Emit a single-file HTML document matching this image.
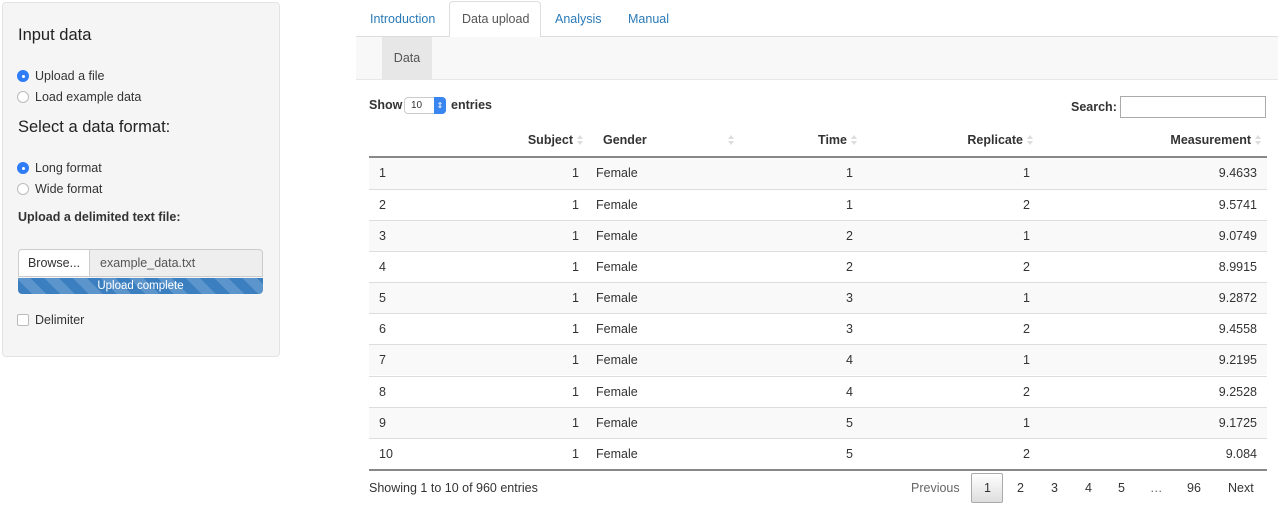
<!DOCTYPE html>
<html><head><style>
*{box-sizing:border-box;margin:0;padding:0}
body{width:1280px;height:505px;background:#fff;font-family:"Liberation Sans",Arial,sans-serif;font-size:12.5px;color:#333;position:relative;overflow:hidden}
.a{position:absolute;white-space:nowrap}
.side{left:2px;top:2px;width:278px;height:355px;background:#f5f5f5;border:1px solid #e3e3e3;border-radius:4px}
.radio{width:12px;height:12px;border-radius:50%;border:1px solid #bbb;background:#fff}
.radio.on{background:#2f7df6;border-color:#2f7df6}
.radio.on::after{content:"";position:absolute;left:3.5px;top:3.5px;width:3px;height:3px;border-radius:50%;background:#fff}
.tab{color:#2a7ab8}
.row{position:absolute;left:369px;width:898px;height:31px;border-top:1px solid #ddd}
.row span{position:absolute;top:8px}
.r{text-align:right}
.th{font-weight:bold;top:133px}
.sort{position:absolute;width:6px;height:11px}
.sort::before{content:"";position:absolute;left:0;top:0;border-left:3px solid transparent;border-right:3px solid transparent;border-bottom:4px solid #ddd}
.sort::after{content:"";position:absolute;left:0;top:6px;border-left:3px solid transparent;border-right:3px solid transparent;border-top:4px solid #ddd}
.pg{top:481px}
</style></head><body>
<div class="a side"></div>
<div class="a" style="left:18px;top:26px;font-size:16.5px;color:#222">Input data</div>
<div class="a radio on" style="left:17px;top:70px"></div><div class="a" style="left:35px;top:69px">Upload a file</div>
<div class="a radio" style="left:17px;top:91px"></div><div class="a" style="left:35px;top:90px">Load example data</div>
<div class="a" style="left:18px;top:118px;font-size:16.5px;color:#222">Select a data format:</div>
<div class="a radio on" style="left:17px;top:162px"></div><div class="a" style="left:35px;top:161px">Long format</div>
<div class="a radio" style="left:17px;top:183px"></div><div class="a" style="left:35px;top:182px">Wide format</div>
<div class="a" style="left:18px;top:210px;font-weight:bold">Upload a delimited text file:</div>
<div class="a" style="left:18px;top:249px;width:72px;height:28px;background:#fff;border:1px solid #ccc;border-radius:4px 0 0 0;text-align:center;line-height:26px">Browse...</div>
<div class="a" style="left:89px;top:249px;width:174px;height:28px;background:#eee;border:1px solid #ccc;border-radius:0 4px 0 0;line-height:26px;padding-left:10px;color:#555">example_data.txt</div>
<div class="a" style="left:18px;top:278px;width:245px;height:16px;border-radius:0 0 4px 4px;background:repeating-linear-gradient(45deg,#3b7fc0 0 10px,#5b95cc 10px 20px);color:#fff;font-size:11.5px;text-align:center;line-height:16px">Upload complete</div>
<div class="a" style="left:17px;top:314px;width:12px;height:12px;border:1px solid #bbb;border-radius:2px;background:#fff"></div>
<div class="a" style="left:35px;top:313px">Delimiter</div>

<div class="a" style="left:356px;top:36px;width:922px;border-top:1px solid #ddd"></div>
<div class="a" style="left:449px;top:1px;width:92px;height:37px;background:#fff;border:1px solid #ddd;border-bottom:none;border-radius:4px 4px 0 0"></div>
<div class="a tab" style="left:370px;top:12px">Introduction</div>
<div class="a" style="left:462px;top:12px;color:#555">Data upload</div>
<div class="a tab" style="left:555px;top:12px">Analysis</div>
<div class="a tab" style="left:628px;top:12px">Manual</div>
<div class="a" style="left:356px;top:37px;width:922px;height:43px;background:#f8f8f8;border-bottom:1px solid #e7e7e7"></div>
<div class="a" style="left:382px;top:37px;width:50px;height:42px;background:#e7e7e7;color:#555;text-align:center;line-height:42px">Data</div>

<div class="a" style="left:369px;top:98px;font-weight:bold">Show</div>
<div class="a" style="left:404px;top:97px;width:42px;height:17px;border:1px solid #ccc;border-radius:4px;background:#fff;font-size:10px;line-height:15px;padding-left:6px">10</div>
<div class="a" style="left:434px;top:97px;width:12px;height:17px;background:#3a86f0;border-radius:0 4px 4px 0;color:#fff;font-size:8px;text-align:center;line-height:17px">⇕</div>
<div class="a" style="left:451px;top:98px;font-weight:bold">entries</div>
<div class="a" style="left:1071px;top:100px;font-weight:bold">Search:</div>
<div class="a" style="left:1120px;top:96px;width:146px;height:22px;border:1px solid #aaa;background:#fff"></div>

<div class="a th r" style="left:480px;width:93px">Subject</div><div class="a sort" style="left:577px;top:135px"></div>
<div class="a th" style="left:603px">Gender</div><div class="a sort" style="left:728px;top:135px"></div>
<div class="a th r" style="left:760px;width:87px">Time</div><div class="a sort" style="left:851px;top:135px"></div>
<div class="a th r" style="left:900px;width:123px">Replicate</div><div class="a sort" style="left:1027px;top:135px"></div>
<div class="a th r" style="left:1100px;width:151px">Measurement</div><div class="a sort" style="left:1255px;top:135px"></div>
<div class="a" style="left:369px;top:156px;width:898px;border-top:2px solid #888"></div>

<div class="row" style="top:158px;background:#f9f9f9;border-top:none"><span style="left:10px">1</span><span class="r" style="right:688px">1</span><span style="left:227px">Female</span><span class="r" style="right:414px">1</span><span class="r" style="right:237px">1</span><span class="r" style="right:10px">9.4633</span></div>
<div class="row" style="top:189px"><span style="left:10px">2</span><span class="r" style="right:688px">1</span><span style="left:227px">Female</span><span class="r" style="right:414px">1</span><span class="r" style="right:237px">2</span><span class="r" style="right:10px">9.5741</span></div>
<div class="row" style="top:220px;background:#f9f9f9"><span style="left:10px">3</span><span class="r" style="right:688px">1</span><span style="left:227px">Female</span><span class="r" style="right:414px">2</span><span class="r" style="right:237px">1</span><span class="r" style="right:10px">9.0749</span></div>
<div class="row" style="top:251px"><span style="left:10px">4</span><span class="r" style="right:688px">1</span><span style="left:227px">Female</span><span class="r" style="right:414px">2</span><span class="r" style="right:237px">2</span><span class="r" style="right:10px">8.9915</span></div>
<div class="row" style="top:282px;background:#f9f9f9"><span style="left:10px">5</span><span class="r" style="right:688px">1</span><span style="left:227px">Female</span><span class="r" style="right:414px">3</span><span class="r" style="right:237px">1</span><span class="r" style="right:10px">9.2872</span></div>
<div class="row" style="top:313px"><span style="left:10px">6</span><span class="r" style="right:688px">1</span><span style="left:227px">Female</span><span class="r" style="right:414px">3</span><span class="r" style="right:237px">2</span><span class="r" style="right:10px">9.4558</span></div>
<div class="row" style="top:344px;background:#f9f9f9"><span style="left:10px">7</span><span class="r" style="right:688px">1</span><span style="left:227px">Female</span><span class="r" style="right:414px">4</span><span class="r" style="right:237px">1</span><span class="r" style="right:10px">9.2195</span></div>
<div class="row" style="top:376px"><span style="left:10px">8</span><span class="r" style="right:688px">1</span><span style="left:227px">Female</span><span class="r" style="right:414px">4</span><span class="r" style="right:237px">2</span><span class="r" style="right:10px">9.2528</span></div>
<div class="row" style="top:407px;background:#f9f9f9"><span style="left:10px">9</span><span class="r" style="right:688px">1</span><span style="left:227px">Female</span><span class="r" style="right:414px">5</span><span class="r" style="right:237px">1</span><span class="r" style="right:10px">9.1725</span></div>
<div class="row" style="top:438px"><span style="left:10px">10</span><span class="r" style="right:688px">1</span><span style="left:227px">Female</span><span class="r" style="right:414px">5</span><span class="r" style="right:237px">2</span><span class="r" style="right:10px">9.084</span></div>
<div class="a" style="left:369px;top:469px;width:898px;border-top:2px solid #888"></div>

<div class="a pg" style="left:369px">Showing 1 to 10 of 960 entries</div>
<div class="a pg" style="left:911px;color:#666">Previous</div>
<div class="a" style="left:971px;top:473px;width:32px;height:30px;border:1px solid #aaa;border-radius:2px;background:linear-gradient(#fff,#ddd)"></div>
<div class="a pg" style="left:984px">1</div>
<div class="a pg" style="left:1017px">2</div>
<div class="a pg" style="left:1051px">3</div>
<div class="a pg" style="left:1085px">4</div>
<div class="a pg" style="left:1118px">5</div>
<div class="a pg" style="left:1150px;color:#666">…</div>
<div class="a pg" style="left:1187px">96</div>
<div class="a pg" style="left:1228px">Next</div>
</body></html>
